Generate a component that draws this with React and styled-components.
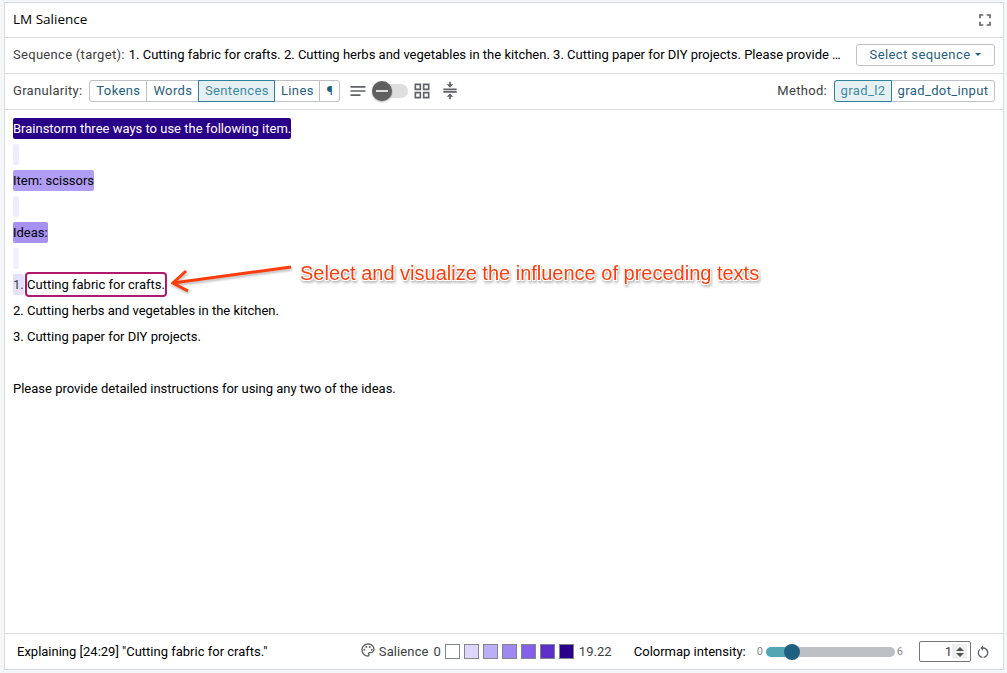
import React from 'react';
import styled, { createGlobalStyle } from 'styled-components';
import {
  MdNotes,
  MdOutlineGridView,
  MdCompress,
  MdFullscreen,
  MdOutlinePalette,
  MdRestartAlt,
} from 'react-icons/md';

const Global = createGlobalStyle`
  * { box-sizing: border-box; }
  body { margin: 0; background: #f3f7f8; font-family: Roboto, sans-serif; font-size: 13px; color: #000; }
`;

const Page = styled.div`
  height: 673px;
  padding: 2px 3px 3px 4px;
`;

const Panel = styled.section`
  height: 668px;
  display: flex;
  flex-direction: column;
  background: #fff;
  border: 1px solid #dadce0;
`;

const Bar = styled.div`
  height: ${(p) => p.$h || 36}px;
  flex: none;
  display: flex;
  align-items: center;
  padding: 0 8px;
  border-bottom: 1px solid #dadce0;
  white-space: nowrap;
`;

const Title = styled.h1`
  margin: 0;
  padding-bottom: 2px;
  flex: 1;
  font: 400 13.5px/20px 'Open Sans', sans-serif;
`;

const Label = styled.span`
  color: ${(p) => p.$c || '#3c4043'};
  letter-spacing: ${(p) => p.$ls ?? 0.3}px;
  padding-bottom: ${(p) => p.$up ?? 2}px;
  margin-right: ${(p) => p.$gap ?? 7}px;
`;

const SequenceText = styled.span`
  padding-bottom: 2px;
`;

const SelectButton = styled.button`
  margin: 0 0 1px auto;
  width: 139px;
  height: 22px;
  padding: 0 0 2px;
  display: flex;
  align-items: center;
  justify-content: center;
  gap: 5px;
  font: 13px Roboto, sans-serif;
  letter-spacing: 0.4px;
  color: #1f6080;
  background: #fff;
  border: 1px solid #bdc1c6;
  border-radius: 3px;
`;

const Caret = styled.i`
  border: 3px solid transparent;
  border-top-color: #1f6080;
  border-bottom: 0;
`;

const Segments = styled.div`
  display: flex;
  margin-bottom: 1px;
`;

const Segment = styled.button`
  width: ${(p) => p.$w}px;
  height: 22px;
  padding: 0 0 2px;
  margin-left: -1px;
  font: 13px Roboto, sans-serif;
  letter-spacing: 0.38px;
  color: ${(p) => (p.$on ? '#3c8ba3' : '#1f6080')};
  background: ${(p) => (p.$on ? '#e6f0f3' : '#fff')};
  border: 1px solid ${(p) => (p.$on ? '#2f8299' : '#bdc1c6')};
  z-index: ${(p) => (p.$on ? 1 : 0)};
  &:first-child { margin-left: 0; border-radius: 3px 0 0 3px; }
  &:last-child { border-radius: 0 3px 3px 0; }
`;

const Tools = styled.div`
  display: flex;
  align-items: center;
  color: #5f6368;
  margin-left: 8px;
  padding-bottom: 1px;
  svg { display: block; }
  svg:last-child { margin-left: 8px; }
`;

const Toggle = styled.span`
  width: 36px;
  height: 14px;
  margin: 0 4px;
  display: flex;
  align-items: center;
  border-radius: 7px;
  background: #dedede;
`;

const Knob = styled.span`
  width: 20px;
  height: 20px;
  flex: none;
  display: grid;
  place-items: center;
  border-radius: 50%;
  background: #5f5f5f;
  box-shadow: 0 1px 2px rgba(0, 0, 0, 0.35);
  &::after { content: ''; width: 12px; height: 2px; background: #dcdcdc; }
`;

const Method = styled.div`
  margin-left: auto;
  display: flex;
  align-items: center;
`;

const Content = styled.main`
  position: relative;
  flex: 1;
  padding: 5px 8px;
`;

const Line = styled.div`
  height: 26px;
  display: flex;
  align-items: center;
  white-space: pre;
`;

const Span = styled.span`
  height: 21px;
  line-height: 21px;
  min-width: ${(p) => p.$w || 6}px;
  border-radius: 2px;
  background: ${(p) => p.$bg || 'transparent'};
  color: ${(p) => p.$fg || '#000'};
`;

const Selected = styled.span`
  height: 25px;
  line-height: 21px;
  margin-left: 1px;
  border: 2px solid #b01870;
  border-radius: 4px;
`;

const Annotation = styled.div`
  position: absolute;
  left: 166px;
  top: 149px;
  display: flex;
  color: #ff3d0a;
  white-space: nowrap;
  font: 20px/28px 'Liberation Sans', sans-serif;
  filter: drop-shadow(1px 2px 1px rgba(0, 0, 0, 0.25));
`;

const Note = styled.span`
  margin-left: 5px;
  text-shadow: 0 0 1px #fff, 1px 1px 0 #fff, -1px -1px 0 #fff, 1px -1px 0 #fff, -1px 1px 0 #fff;
`;

const Footer = styled(Bar)`
  border-top: 1px solid #dadce0;
  border-bottom: 0;
  padding: 0 12px;
`;

const Status = styled.span`
  width: 343px;
`;

const Legend = styled.div`
  width: 274px;
  display: flex;
  align-items: center;
  color: #3c4043;
  svg { margin: 0 3px 3px 0; color: #5f6368; }
`;

const Swatches = styled.div`
  display: flex;
  gap: 4px;
  margin: 0 5px 0 4px;
`;

const Swatch = styled.span`
  width: 15px;
  height: 15px;
  border: 1px solid #80868b;
  background: ${(p) => p.$c};
`;

const Tick = styled.span`
  font-size: 11px;
  color: #80868b;
`;

const Track = styled.div`
  width: 129px;
  height: 10px;
  margin: 0 2px 0 3px;
  display: flex;
  align-items: center;
  border-radius: 5px;
  background: linear-gradient(to right, #52a6b3 26px, #bdc1c6 26px);
`;

const Thumb = styled.span`
  width: 16px;
  height: 16px;
  margin-left: 18px;
  border-radius: 50%;
  background: #1f6080;
`;

const NumberBox = styled.div`
  width: 52px;
  height: 21px;
  margin: 0 4px 0 16px;
  padding-right: 3px;
  display: flex;
  align-items: center;
  justify-content: flex-end;
  border: 1px solid #767676;
  border-radius: 2px;
  color: #3c4043;
`;

const Spinner = styled.span`
  width: 15px;
  height: 15px;
  background: #efefef;
  display: flex;
  flex-direction: column;
  align-items: center;
  justify-content: center;
  gap: 2px;
  &::before { content: ''; border: 4px solid transparent; border-top: 0; border-bottom-color: #505050; }
  &::after { content: ''; border: 4px solid transparent; border-bottom: 0; border-top-color: #505050; }
`;

const granularities = [
  ['Tokens', 58],
  ['Words', 53],
  ['Sentences', 77],
  ['Lines', 46],
  ['¶', 21],
];

const colors = ['#ffffff', '#ded6fb', '#bdaef8', '#a188f0', '#845fea', '#5f2ec8', '#290088'];

export default function App() {
  return (
    <Page>
      <Global />
      <Panel>
        <Bar $h={35}>
          <Title>LM Salience</Title>
          <MdFullscreen size={20} color="#5f6368" />
        </Bar>
        <Bar>
          <Label $gap={4}>Sequence (target):</Label>
          <SequenceText>
            1. Cutting fabric for crafts. 2. Cutting herbs and vegetables in the kitchen. 3. Cutting
            paper for DIY projects. Please provide …
          </SequenceText>
          <SelectButton>Select sequence<Caret /></SelectButton>
        </Bar>
        <Bar>
          <Label>Granularity:</Label>
          <Segments>
            {granularities.map(([name, w]) => (
              <Segment key={name} $w={w} $on={name === 'Sentences'}>{name}</Segment>
            ))}
          </Segments>
          <Tools>
            <MdNotes size={20} />
            <Toggle><Knob /></Toggle>
            <MdOutlineGridView size={20} />
            <MdCompress size={20} />
          </Tools>
          <Method>
            <Label>Method:</Label>
            <Segments>
              <Segment $w={58} $on>grad_l2</Segment>
              <Segment $w={104}>grad_dot_input</Segment>
            </Segments>
          </Method>
        </Bar>
        <Content>
          <Line><Span $bg="#290088" $fg="#fff">Brainstorm three ways to use the following item.</Span></Line>
          <Line><Span $bg="#f0ecff" /></Line>
          <Line><Span $bg="#b09ef6">Item: scissors</Span></Line>
          <Line><Span $bg="#f0ecff" /></Line>
          <Line><Span $bg="#a791f3">Ideas:</Span></Line>
          <Line><Span $bg="#f3f0ff" /></Line>
          <Line><Span $bg="#e6e0fd" $fg="#3c4043" $w={11}>1.</Span><Selected>Cutting fabric for crafts.</Selected></Line>
          <Line><Span>2. Cutting herbs and vegetables in the kitchen.</Span></Line>
          <Line><Span>3. Cutting paper for DIY projects.</Span></Line>
          <Line />
          <Line><Span>Please provide detailed instructions for using any two of the ideas.</Span></Line>
          <Annotation>
            <svg width="124" height="36" fill="none" stroke="#ff3d0a" strokeWidth="3">
              <path d="M120 8L2 24" />
              <path d="M15 12L2 24L17 32" />
            </svg>
            <Note>Select and visualize the influence of preceding texts</Note>
          </Annotation>
        </Content>
        <Footer>
          <Status>Explaining [24:29] "Cutting fabric for crafts."</Status>
          <Legend>
            <MdOutlinePalette size={16} />
            <Label $gap={5} $ls={0.1} $up={0}>Salience</Label>0
            <Swatches>{colors.map((c) => <Swatch key={c} $c={c} />)}</Swatches>
            19.22
          </Legend>
          <Label $gap={11} $ls={0} $up={0} $c="#000">Colormap intensity:</Label>
          <Tick>0</Tick>
          <Track><Thumb /></Track>
          <Tick>6</Tick>
          <NumberBox>1<Spinner /></NumberBox>
          <MdRestartAlt size={16} color="#5f6368" />
        </Footer>
      </Panel>
    </Page>
  );
}
